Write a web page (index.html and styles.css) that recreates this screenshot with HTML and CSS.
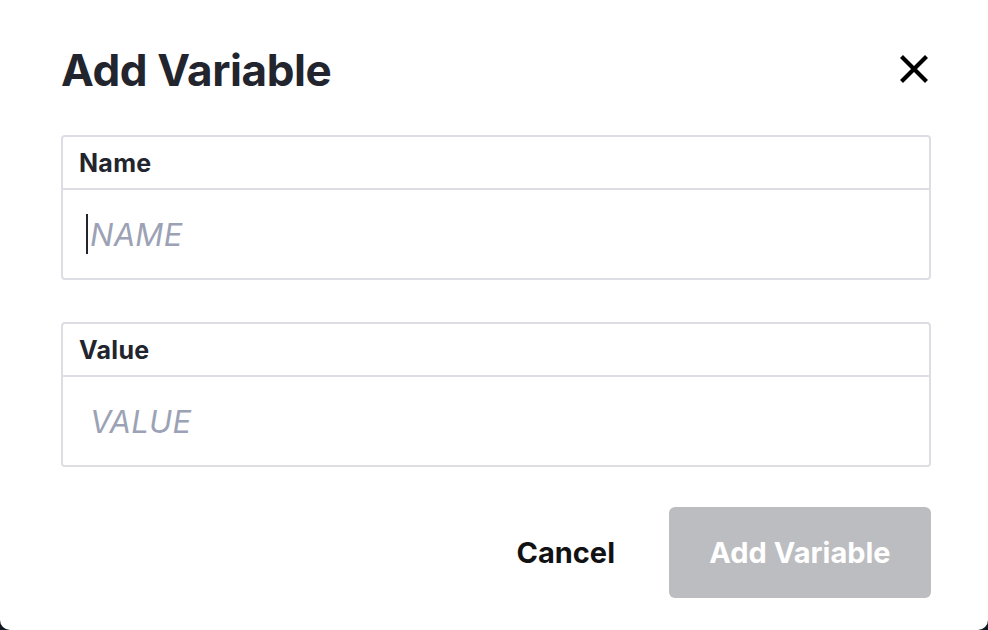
FILE: index.html
```html
<!DOCTYPE html>
<html lang="en">
<head>
<meta charset="utf-8">
<title>Add Variable</title>
<link rel="stylesheet" href="styles.css">
</head>
<body>
<div class="dialog">
  <div class="dialog-header">
    <h1 class="dialog-title">Add Variable</h1>
    <button class="close-btn" aria-label="Close">
      <svg width="32" height="32" viewBox="0 0 32 32"><path d="M3.5 3.5 L28.5 28.5 M28.5 3.5 L3.5 28.5" stroke="#000" stroke-width="4.2" fill="none"/></svg>
    </button>
  </div>
  <div class="field">
    <div class="field-label">Name</div>
    <div class="field-input"><span class="caret"></span><span class="placeholder">NAME</span></div>
  </div>
  <div class="field field-second">
    <div class="field-label">Value</div>
    <div class="field-input"><span class="placeholder placeholder-pad">VALUE</span></div>
  </div>
  <div class="actions">
    <button class="btn-cancel">Cancel</button>
    <button class="btn-primary">Add Variable</button>
  </div>
</div>
</body>
</html>
```
FILE: styles.css
```css
html, body {
  margin: 0;
  padding: 0;
}
body {
  background: #111820;
  font-family: Inter, "Noto Sans", sans-serif;
  width: 988px;
  height: 630px;
  overflow: hidden;
}
.dialog {
  box-sizing: border-box;
  width: 988px;
  height: 630px;
  background: #fff;
  border-radius: 0 0 10px 10px;
  padding: 44px 57px 0 61px;
  display: flex;
  flex-direction: column;
}
.dialog-header {
  display: flex;
  justify-content: space-between;
  align-items: center;
  height: 50px;
}
.dialog-title {
  margin: 0;
  font-size: 44px;
  font-weight: 700;
  color: #22252d;
  letter-spacing: -0.4px;
  line-height: 50px;
  position: relative;
  top: 1px;
}
.close-btn {
  border: 0;
  background: none;
  padding: 0;
  width: 32px;
  height: 32px;
  margin-right: 1px;
  display: flex;
}
.field {
  margin-top: 41px;
  border: 2px solid #dcdee3;
  border-radius: 4px;
  display: flex;
  flex-direction: column;
}
.field-second {
  margin-top: 42px;
}
.field-label {
  height: 53px;
  box-sizing: border-box;
  padding: 0 16px;
  display: flex;
  align-items: center;
  font-size: 25px;
  font-weight: 700;
  color: #22252d;
  letter-spacing: 0.3px;
  border-bottom: 2px solid #dcdee3;
}
.field-input {
  height: 88px;
  display: flex;
  align-items: center;
  padding: 0 23px;
}
.caret {
  width: 2px;
  height: 40px;
  background: #22252d;
  margin-right: 2px;
}
.placeholder {
  font-size: 31px;
  font-style: italic;
  color: #9ca2b5;
  letter-spacing: 0.3px;
}
.placeholder-pad {
  margin-left: 4px;
}
.actions {
  margin-top: 40px;
  display: flex;
  justify-content: flex-end;
  align-items: center;
  gap: 54px;
}
.btn-cancel {
  border: 0;
  background: none;
  padding: 0;
  font-family: inherit;
  font-size: 29px;
  font-weight: 700;
  color: #111214;
}
.btn-primary {
  border: 0;
  width: 262px;
  height: 91px;
  border-radius: 6px;
  background: #bcbdc1;
  color: #fff;
  font-family: inherit;
  font-size: 29px;
  font-weight: 700;
  letter-spacing: 0;
}
```
